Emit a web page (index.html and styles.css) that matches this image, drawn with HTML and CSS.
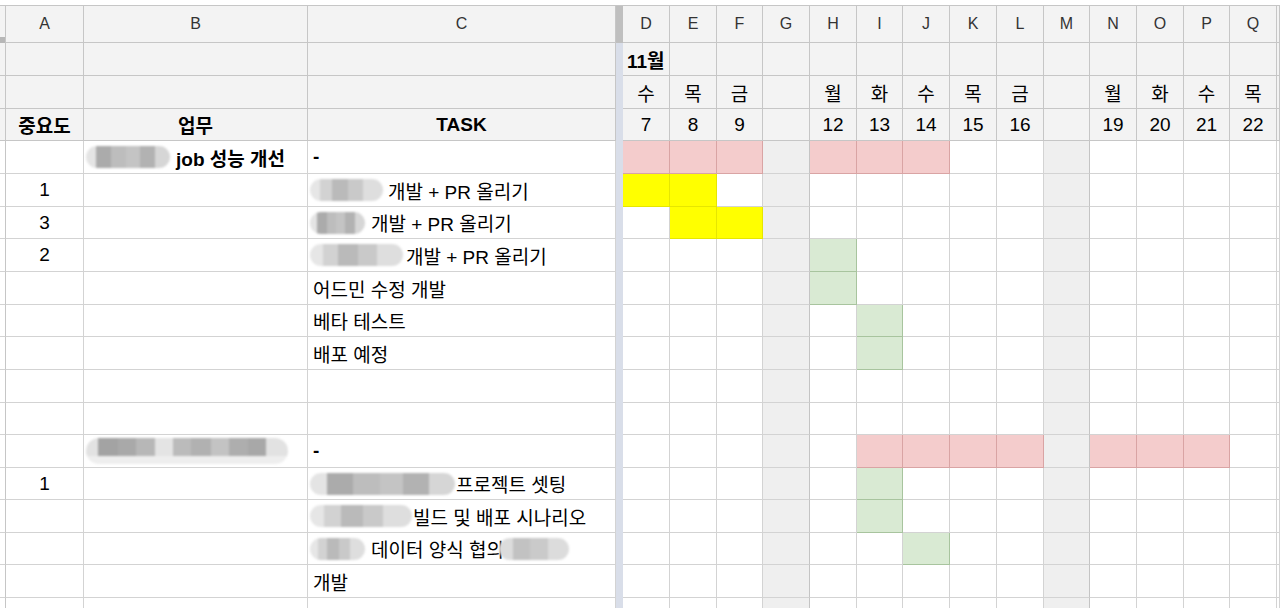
FILE: index.html
```html
<!DOCTYPE html>
<html lang="ko">
<head>
<meta charset="utf-8">
<title>Sheet</title>
<link rel="stylesheet" href="styles.css">
</head>
<body>
<div class="sheet">
  <!-- column letters -->
  <div class="row r37 letters">
    <div class="rh corner"></div>
    <div class="hd ctr lt">A</div><div class="hd ctr lt">B</div><div class="hd ctr lt">C</div>
    <div class="dv dvtop"></div>
    <div class="hd ctr lt">D</div><div class="hd ctr lt">E</div><div class="hd ctr lt">F</div><div class="hd ctr lt">G</div><div class="hd ctr lt">H</div><div class="hd ctr lt">I</div><div class="hd ctr lt">J</div><div class="hd ctr lt">K</div><div class="hd ctr lt">L</div><div class="hd ctr lt">M</div><div class="hd ctr lt">N</div><div class="hd ctr lt">O</div><div class="hd ctr lt">P</div><div class="hd ctr lt">Q</div><div class="hd"></div>
  </div>
  <!-- month -->
  <div class="row">
    <div class="rh hdr"></div>
    <div class="hd"></div><div class="hd"></div><div class="hd"></div>
    <div class="dv"></div>
    <div class="hd bold pl month">11월</div><div class="hd"></div><div class="hd"></div><div class="hd"></div><div class="hd"></div><div class="hd"></div><div class="hd"></div><div class="hd"></div><div class="hd"></div><div class="hd"></div><div class="hd"></div><div class="hd"></div><div class="hd"></div><div class="hd"></div><div class="hd"></div>
  </div>
  <!-- weekdays -->
  <div class="row">
    <div class="rh hdr"></div>
    <div class="hd"></div><div class="hd"></div><div class="hd"></div>
    <div class="dv"></div>
    <div class="hd ctr">수</div><div class="hd ctr">목</div><div class="hd ctr">금</div><div class="hd"></div><div class="hd ctr">월</div><div class="hd ctr">화</div><div class="hd ctr">수</div><div class="hd ctr">목</div><div class="hd ctr">금</div><div class="hd"></div><div class="hd ctr">월</div><div class="hd ctr">화</div><div class="hd ctr">수</div><div class="hd ctr">목</div><div class="hd"></div>
  </div>
  <!-- titles / dates -->
  <div class="row r32">
    <div class="rh hdr"></div>
    <div class="hd ctr bold">중요도</div><div class="hd ctr bold">업무</div><div class="hd ctr bold">TASK</div>
    <div class="dv"></div>
    <div class="hd ctr">7</div><div class="hd ctr">8</div><div class="hd ctr">9</div><div class="hd"></div><div class="hd ctr">12</div><div class="hd ctr">13</div><div class="hd ctr">14</div><div class="hd ctr">15</div><div class="hd ctr">16</div><div class="hd"></div><div class="hd ctr">19</div><div class="hd ctr">20</div><div class="hd ctr">21</div><div class="hd ctr">22</div><div class="hd"></div>
  </div>

  <!-- row 5 -->
  <div class="row">
    <div class="rh"></div>
    <div></div>
    <div class="pl bold"><span class="blob w84"></span><span class="gap6">job 성능 개선</span></div>
    <div class="pl bold">-</div>
    <div class="dv"></div>
    <div class="pk"></div><div class="pk"></div><div class="pk"></div><div class="we"></div><div class="pk"></div><div class="pk"></div><div class="pk"></div><div></div><div></div><div class="we"></div><div></div><div></div><div></div><div></div><div></div>
  </div>
  <!-- row 6 -->
  <div class="row">
    <div class="rh"></div>
    <div class="ctr">1</div>
    <div></div>
    <div class="pl"><span class="blob w73 v2"></span><span class="gap5">개발 + PR 올리기</span></div>
    <div class="dv"></div>
    <div class="yl"></div><div class="yl"></div><div></div><div class="we"></div><div></div><div></div><div></div><div></div><div></div><div class="we"></div><div></div><div></div><div></div><div></div><div></div>
  </div>
  <!-- row 7 -->
  <div class="row r32">
    <div class="rh"></div>
    <div class="ctr">3</div>
    <div></div>
    <div class="pl"><span class="blob w55"></span><span class="gap6">개발 + PR 올리기</span></div>
    <div class="dv"></div>
    <div></div><div class="yl"></div><div class="yl"></div><div class="we"></div><div></div><div></div><div></div><div></div><div></div><div class="we"></div><div></div><div></div><div></div><div></div><div></div>
  </div>
  <!-- row 8 -->
  <div class="row">
    <div class="rh"></div>
    <div class="ctr">2</div>
    <div></div>
    <div class="pl"><span class="blob w93 v2"></span><span class="gap3">개발 + PR 올리기</span></div>
    <div class="dv"></div>
    <div></div><div></div><div></div><div class="we"></div><div class="gr"></div><div></div><div></div><div></div><div></div><div class="we"></div><div></div><div></div><div></div><div></div><div></div>
  </div>
  <!-- row 9 -->
  <div class="row">
    <div class="rh"></div>
    <div></div>
    <div></div>
    <div class="pl">어드민 수정 개발</div>
    <div class="dv"></div>
    <div></div><div></div><div></div><div class="we"></div><div class="gr"></div><div></div><div></div><div></div><div></div><div class="we"></div><div></div><div></div><div></div><div></div><div></div>
  </div>
  <!-- row 10 -->
  <div class="row r32">
    <div class="rh"></div>
    <div></div>
    <div></div>
    <div class="pl">베타 테스트</div>
    <div class="dv"></div>
    <div></div><div></div><div></div><div class="we"></div><div></div><div class="gr"></div><div></div><div></div><div></div><div class="we"></div><div></div><div></div><div></div><div></div><div></div>
  </div>
  <!-- row 11 -->
  <div class="row">
    <div class="rh"></div>
    <div></div>
    <div></div>
    <div class="pl">배포 예정</div>
    <div class="dv"></div>
    <div></div><div></div><div></div><div class="we"></div><div></div><div class="gr"></div><div></div><div></div><div></div><div class="we"></div><div></div><div></div><div></div><div></div><div></div>
  </div>
  <!-- row 12 -->
  <div class="row">
    <div class="rh"></div>
    <div></div><div></div><div></div>
    <div class="dv"></div>
    <div></div><div></div><div></div><div class="we"></div><div></div><div></div><div></div><div></div><div></div><div class="we"></div><div></div><div></div><div></div><div></div><div></div>
  </div>
  <!-- row 13 -->
  <div class="row r32">
    <div class="rh"></div>
    <div></div><div></div><div></div>
    <div class="dv"></div>
    <div></div><div></div><div></div><div class="we"></div><div></div><div></div><div></div><div></div><div></div><div class="we"></div><div></div><div></div><div></div><div></div><div></div>
  </div>
  <!-- row 14 -->
  <div class="row">
    <div class="rh"></div>
    <div></div>
    <div class="pl"><span class="blob w202 tall"></span></div>
    <div class="pl bold">-</div>
    <div class="dv"></div>
    <div></div><div></div><div></div><div class="we"></div><div></div><div class="pk"></div><div class="pk"></div><div class="pk"></div><div class="pk"></div><div class="we"></div><div class="pk"></div><div class="pk"></div><div class="pk"></div><div></div><div></div>
  </div>
  <!-- row 15 -->
  <div class="row r32">
    <div class="rh"></div>
    <div class="ctr">1</div>
    <div></div>
    <div class="pl"><span class="blob w145"></span><span class="gap1">프로젝트 셋팅</span></div>
    <div class="dv"></div>
    <div></div><div></div><div></div><div class="we"></div><div></div><div class="gr"></div><div></div><div></div><div></div><div class="we"></div><div></div><div></div><div></div><div></div><div></div>
  </div>
  <!-- row 16 -->
  <div class="row">
    <div class="rh"></div>
    <div></div>
    <div></div>
    <div class="pl"><span class="blob w102 v2"></span><span class="gap1">빌드 및 배포 시나리오</span></div>
    <div class="dv"></div>
    <div></div><div></div><div></div><div class="we"></div><div></div><div class="gr"></div><div></div><div></div><div></div><div class="we"></div><div></div><div></div><div></div><div></div><div></div>
  </div>
  <!-- row 17 -->
  <div class="row r32">
    <div class="rh"></div>
    <div></div>
    <div></div>
    <div class="pl"><span class="blob w55 v2"></span><span class="gap6">데이터 양식 협의</span><span class="blob w70 over"></span></div>
    <div class="dv"></div>
    <div></div><div></div><div></div><div class="we"></div><div></div><div></div><div class="gr"></div><div></div><div></div><div class="we"></div><div></div><div></div><div></div><div></div><div></div>
  </div>
  <!-- row 18 -->
  <div class="row">
    <div class="rh"></div>
    <div></div>
    <div></div>
    <div class="pl">개발</div>
    <div class="dv"></div>
    <div></div><div></div><div></div><div class="we"></div><div></div><div></div><div></div><div></div><div></div><div class="we"></div><div></div><div></div><div></div><div></div><div></div>
  </div>
  <!-- row 19 -->
  <div class="row">
    <div class="rh"></div>
    <div></div><div></div><div></div>
    <div class="dv"></div>
    <div></div><div></div><div></div><div class="we"></div><div></div><div></div><div></div><div></div><div></div><div class="we"></div><div></div><div></div><div></div><div></div><div></div>
  </div>
</div>
</body>
</html>
```

FILE: styles.css
```css
html, body {
  margin: 0;
  padding: 0;
  background: #ffffff;
}

body {
  width: 1280px;
  height: 608px;
  overflow: hidden;
  font-family: "Liberation Sans", "Noto Sans CJK KR", Arial, sans-serif;
  color: #000;
}

.sheet {
  margin-top: 5px;
  border-top: 1px solid #c6c6c6;
  display: flex;
  flex-direction: column;
}

.row {
  display: grid;
  grid-template-columns: 6px 78px 224px 308px 7px 47px 47px 46px 47px 47px 46px 47px 47px 47px 46px 47px 47px 46px 47px 1fr;
  height: 33px;
  flex: none;
}

.r37 { height: 37px; }
.r32 { height: 32px; }

.row > div {
  box-sizing: border-box;
  border-right: 1px solid #d3d3d3;
  border-bottom: 1px solid #d3d3d3;
  display: flex;
  align-items: center;
  font-size: 19px;
  white-space: nowrap;
  min-width: 0;
  overflow: visible;
  background: #ffffff;
}

/* row header strip on the far left */
.row > .rh {
  border-right-color: #c6c6c6;
  border-bottom-color: #d3d3d3;
}
.row > .rh.hdr { background: #f3f3f3; border-bottom-color: #c6c6c6; }
.row > .rh.corner {
  background: linear-gradient(#f3f3f3 0 31px, #b7b7b7 31px);
  border-bottom: none;
}

/* header cells */
.row > .hd {
  background: #f3f3f3;
  border-right-color: #c6c6c6;
  border-bottom-color: #c6c6c6;
}

.row > .lt {
  font-size: 16px;
  color: #333;
}

.ctr { justify-content: center; }
.pl { padding-left: 5px; }
.bold { font-weight: bold; }
.month { overflow: visible; padding-left: 4px; }

/* frozen divider */
.row > .dv {
  background: #d9dee9;
  border: none;
}
.row > .dv.dvtop { background: #bfbfbf; }

/* weekend gray columns */
.row > .we {
  background: #efefef;
  border-right-color: #c4c4c4;
  border-bottom-color: #d3d3d3;
}

/* bar colors */
.row > .pk {
  background: #f4cccc;
  border-right-color: #d9a4a4;
  border-bottom-color: #d9a4a4;
}
.row > .yl {
  background: #ffff00;
  border-right-color: #e6e600;
  border-bottom-color: #e6e600;
}
.row > .gr {
  background: #d9ead3;
  border-right-color: #a8c49e;
  border-bottom-color: #a8c49e;
}

/* redaction blobs */
.blob {
  display: inline-block;
  height: 22px;
  border-radius: 11px;
  margin-left: -3px;
  flex: none;
  background: linear-gradient(90deg, #e4e4e4 0 12%, #ababab 12% 30%, #bdbdbd 30% 48%, #c4c4c4 48% 64%, #b2b2b2 64% 82%, #d6d6d6 82% 100%);
  filter: blur(1.2px);
}
.blob.v2 {
  background: linear-gradient(90deg, #e6e6e6 0 14%, #d2d2d2 14% 30%, #bababa 30% 52%, #c9c9c9 52% 72%, #dedede 72% 100%);
}
.blob.tall {
  height: 26px;
  border-radius: 13px;
  background:
    linear-gradient(#0000 0 70%, #eeeeee 70% 100%),
    linear-gradient(90deg, #e2e2e2 0 6%, #a3a3a3 6% 16%, #a9a9a9 16% 25%, #b7b7b7 25% 34%, #e4e4e4 34% 43%, #bbbbbb 43% 52%, #b1b1b1 52% 62%, #c3c3c3 62% 71%, #aeaeae 71% 80%, #a8a8a8 80% 89%, #e2e2e2 89% 100%);
}
.blob.over {
  margin-left: -5px;
  background: linear-gradient(90deg, #dcdcdc 0 20%, #c2c2c2 20% 45%, #cacaca 45% 70%, #dcdcdc 70% 100%);
}

.w55 { width: 55px; }
.w70 { width: 70px; }
.w73 { width: 73px; }
.w84 { width: 84px; }
.w93 { width: 93px; }
.w102 { width: 102px; }
.w145 { width: 145px; }
.w202 { width: 202px; }

.gap1 { margin-left: 1px; }
.gap3 { margin-left: 3px; }
.gap5 { margin-left: 5px; }
.gap6 { margin-left: 6px; }
```
